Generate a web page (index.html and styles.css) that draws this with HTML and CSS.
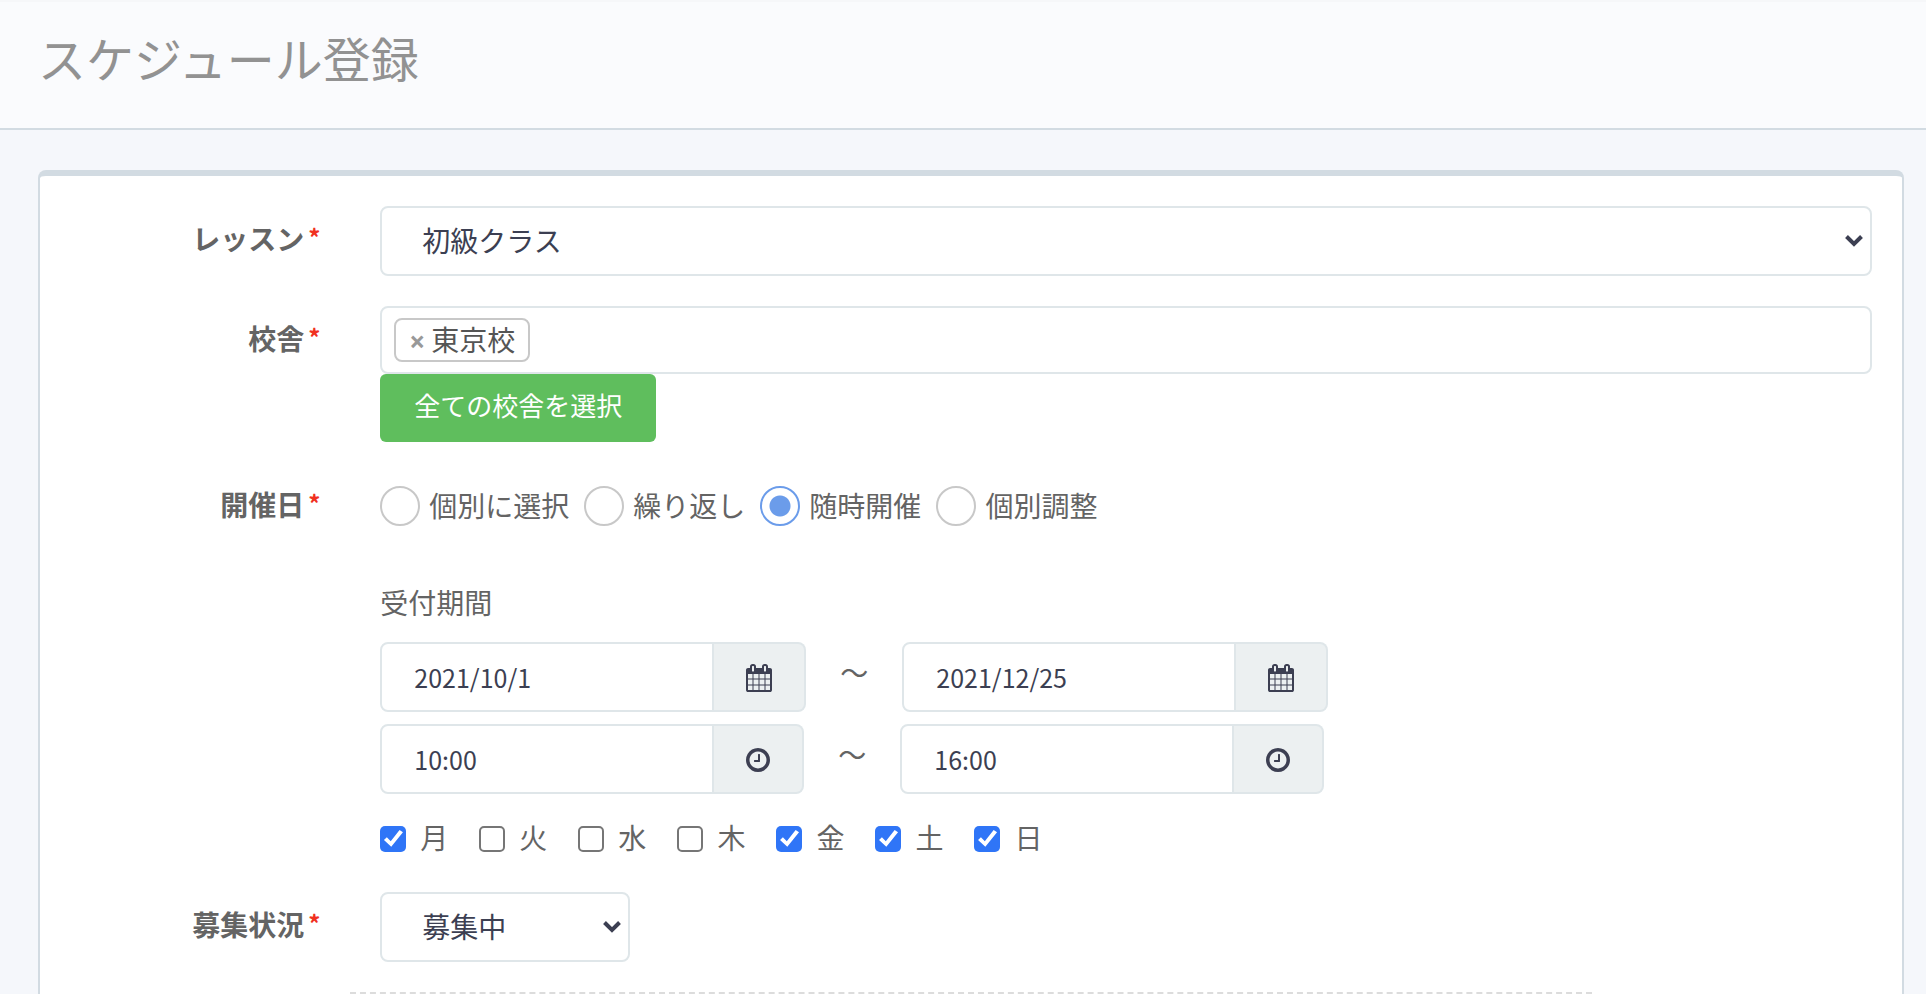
FILE: index.html
```html
<!DOCTYPE html>
<html lang="ja">
<head>
<meta charset="utf-8">
<title>スケジュール登録</title>
<link rel="stylesheet" href="styles.css">
</head>
<body>
<svg class="sprite" aria-hidden="true">
  <symbol id="calendar" viewBox="64 0 1664 1792"><path d="M192 1664h288v-288h-288v288zm352 0h320v-288h-320v288zm-352-352h288v-320h-288v320zm352 0h320v-320h-320v320zm-352-384h288v-288h-288v288zm736 736h320v-288h-320v288zm-384-736h320v-288h-320v288zm768 736h288v-288h-288v288zm-384-352h320v-320h-320v320zm-352-864v-288q0-13-9.500-22.500t-22.500-9.500h-64q-13 0-22.500 9.500t-9.500 22.500v288q0 13 9.500 22.500t22.500 9.500h64q13 0 22.500-9.500t9.500-22.500zm736 864h288v-320h-288v320zm-384-384h320v-288h-320v288zm384 0h288v-288h-288v288zm32-480v-288q0-13-9.500-22.500t-22.500-9.500h-64q-13 0-22.500 9.500t-9.500 22.500v288q0 13 9.500 22.500t22.500 9.500h64q13 0 22.500-9.500t9.500-22.500zm384-64v1280q0 52-38 90t-90 38h-1408q-52 0-90-38t-38-90v-1280q0-52 38-90t90-38h128v-96q0-66 47-113t113-47h64q66 0 113 47t47 113v96h384v-96q0-66 47-113t113-47h64q66 0 113 47t47 113v96h128q52 0 90 38t38 90z"/></symbol>
  <symbol id="clock" viewBox="128 128 1536 1536"><path d="M1024 544v448q0 14-9 23t-23 9h-320q-14 0-23-9t-9-23v-64q0-14 9-23t23-9h224v-352q0-14 9-23t23-9h64q14 0 23 9t9 23zM1440 896q0-148-73-273t-198-198-273-73-273 73-198 198-73 273 73 273 198 198 273 73 273-73 198-198 73-273zM1664 896q0 209-103 385.500t-279.500 279.500-385.500 103-385.500-103-279.500-279.500-103-385.500 103-385.500 279.500-279.500 385.500-103 385.500 103 279.500 279.500 103 385.500z"/></symbol>
  <symbol id="chevron" viewBox="0 0 18 12"><path d="M1.500 1.500 9 9l7.500-7.500" fill="none" stroke="currentColor" stroke-width="4"/></symbol>
</svg>
<header class="page-header"><h1>スケジュール登録</h1></header>
<main>
  <form class="card">
    <div class="row">
      <label class="name" for="lesson">レッスン<span class="required">*</span></label>
      <div class="field">
        <div class="select">
          <select id="lesson"><option>初級クラス</option></select>
          <svg class="chevron"><use href="#chevron"/></svg>
        </div>
      </div>
    </div>
    <div class="row">
      <div class="name" id="school-name">校舎<span class="required">*</span></div>
      <div class="field">
        <div class="tags" role="group" aria-labelledby="school-name">
          <span class="tag"><button class="remove" type="button" aria-label="東京校を削除">×</button>東京校</span>
        </div>
        <button class="select-all" type="button">全ての校舎を選択</button>
      </div>
    </div>
    <div class="row">
      <div class="name" id="date-name">開催日<span class="required">*</span></div>
      <div class="field dates">
        <div class="radios" role="radiogroup" aria-labelledby="date-name">
          <label><input type="radio" name="kind">個別に選択</label>
          <label><input type="radio" name="kind">繰り返し</label>
          <label><input type="radio" name="kind" checked>随時開催</label>
          <label><input type="radio" name="kind">個別調整</label>
        </div>
        <p class="period">受付期間</p>
        <div class="range">
          <div class="group"><input type="text" value="2021/10/1" aria-label="開始日"><button type="button" aria-label="開始日を選択"><svg class="calendar"><use href="#calendar"/></svg></button></div>
          <span class="to">〜</span>
          <div class="group"><input type="text" value="2021/12/25" aria-label="終了日"><button type="button" aria-label="終了日を選択"><svg class="calendar"><use href="#calendar"/></svg></button></div>
        </div>
        <div class="range">
          <div class="group"><input type="text" value="10:00" aria-label="開始時刻"><button type="button" aria-label="開始時刻を選択"><svg class="clock"><use href="#clock"/></svg></button></div>
          <span class="to">〜</span>
          <div class="group"><input type="text" value="16:00" aria-label="終了時刻"><button type="button" aria-label="終了時刻を選択"><svg class="clock"><use href="#clock"/></svg></button></div>
        </div>
        <div class="days">
          <label><input type="checkbox" checked>月</label>
          <label><input type="checkbox">火</label>
          <label><input type="checkbox">水</label>
          <label><input type="checkbox">木</label>
          <label><input type="checkbox" checked>金</label>
          <label><input type="checkbox" checked>土</label>
          <label><input type="checkbox" checked>日</label>
        </div>
      </div>
    </div>
    <div class="row">
      <label class="name" for="status">募集状況<span class="required">*</span></label>
      <div class="field">
        <div class="select short">
          <select id="status"><option>募集中</option></select>
          <svg class="chevron"><use href="#chevron"/></svg>
        </div>
      </div>
    </div>
    <hr class="divider">
  </form>
</main>
</body>
</html>
```
FILE: styles.css
```css
* { box-sizing: border-box; }
body {
  margin: 0;
  background: #f5f7fb;
  color: #646464;
  font: 28px/40px "Noto Sans CJK JP", sans-serif;
}
button, input, select { margin: 0; font: inherit; color: inherit; }
svg { display: block; fill: currentColor; }
.sprite { position: absolute; width: 0; height: 0; }
.page-header {
  padding: 20px 38px 36px;
  border-top: 2px solid #f6f7f9;
  border-bottom: 2px solid #d2dbe2;
  background: #fafbfd;
}
.page-header h1 {
  margin: 0;
  color: #929292;
  font-size: 48px;
  font-weight: 400;
  line-height: 70px;
}
main { padding: 40px 22px 0 38px; }
.card {
  border: 2px solid #d2dbe2;
  border-top-width: 6px;
  border-bottom: 0;
  border-radius: 8px 8px 0 0;
  background: #fff;
  padding-top: 30px;
}
.row { display: grid; grid-template-columns: 1fr 5fr; margin-bottom: 30px; }
.name {
  padding: 12px 30px 0 0;
  font-weight: 700;
  text-align: right;
}
.required {
  margin-left: 4px;
  color: #f03020;
  font-size: 24px;
  line-height: 24px;
  vertical-align: 3px;
}
.field { padding: 0 30px; min-width: 0; }

.select { position: relative; color: #3c3f52; }
.select select {
  appearance: none;
  display: block;
  width: 100%;
  height: 70px;
  padding: 0 40px 2px;
  border: 2px solid #dfe6e9;
  border-radius: 8px;
  background: #fff;
}
.short { width: 250px; }
.chevron {
  position: absolute;
  right: 9px;
  top: 29px;
  width: 18px;
  height: 12px;
  pointer-events: none;
}

.tags {
  display: flex;
  height: 68px;
  padding: 10px 12px;
  border: 2px solid #dfe6e9;
  border-radius: 8px;
}
.tag {
  display: flex;
  align-items: center;
  height: 44px;
  padding: 0 13px 2px;
  border: 2px solid #c8c8c8;
  border-radius: 8px;
  color: #555;
}
.remove {
  width: 22px;
  padding: 4px 0 0;
  border: 0;
  background: none;
  color: #999;
  font-family: "Open Sans", sans-serif;
  font-weight: 700;
  font-size: 28px;
  line-height: 36px;
  text-align: left;
}
.select-all {
  display: block;
  height: 68px;
  padding: 0 34px 6px;
  border: 0;
  border-radius: 6px;
  background: #5fbe5d;
  color: #fff;
  font-size: 26px;
}

.dates { padding-top: 14px; }
.radios { display: flex; gap: 15px; }
.radios label { display: flex; gap: 9px; line-height: 38px; }
.radios input {
  appearance: none;
  width: 40px;
  height: 40px;
  border: 2px solid #c8c8c8;
  border-radius: 50%;
}
.radios input:checked {
  border-color: #6b9cea;
  background: radial-gradient(circle, #6b9cea 10px, #fff 11px);
}
.period { margin: 56px 0 20px; }
.range { display: flex; align-items: center; margin-bottom: 12px; }
.group { display: flex; height: 70px; color: #3c3f52; }
.group input {
  width: 334px;
  padding: 0 32px;
  border: 2px solid #dfe6e9;
  border-radius: 8px 0 0 8px;
  font-size: 25px;
}
.group button {
  padding: 2px 32px 0;
  border: 2px solid #dfe6e9;
  border-left: 0;
  border-radius: 0 8px 8px 0;
  background: #ecf0f1;
}
.calendar { width: 26px; height: 28px; }
.clock { width: 24px; height: 24px; }
.to { padding: 0 34px 10px; }
.days { display: flex; gap: 31px; padding: 13px 0 3px; }
.days label { display: flex; gap: 14px; height: 40px; line-height: 36px; }
.days input {
  appearance: none;
  width: 26px;
  height: 26px;
  margin-top: 7px;
  border: 2px solid #767676;
  border-radius: 5px;
}
.days input:checked { border: 0; background: #2f75f7; }
.days input:checked::before {
  content: "";
  display: block;
  height: 26px;
  background: #fff;
  clip-path: polygon(14% 54%, 25% 43%, 40% 59%, 74% 15%, 87% 24%, 42% 80%);
}
.divider {
  width: 66.666%;
  margin: 0 0 0 16.666%;
  border: 0;
  border-top: 2px dashed #dcdcdc;
}
```
